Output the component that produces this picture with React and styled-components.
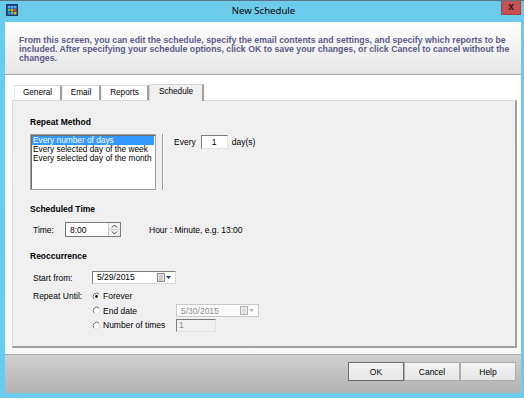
import React from "react";
import styled, { createGlobalStyle } from "styled-components";

const Global = createGlobalStyle`
  html, body { margin: 0; padding: 0; }
  body {
    width: 524px; height: 398px; overflow: hidden;
    font-family: "Liberation Sans", Arial, sans-serif;
    color: #000;
  }
  #root { width: 524px; height: 398px; }
`;

const Window = styled.div`
  width: 524px; height: 398px; box-sizing: border-box;
  background: #6ccbea;
  border-top: 1px solid #587684;
  padding: 0 3px 5px 5px;
  display: flex; flex-direction: column;
`;

const TitleBar = styled.div`
  height: 21px; flex: none;
  display: grid; grid-template-columns: 1fr auto 1fr; align-items: start;
`;

const AppIcon = styled.svg`
  margin: 3px 0 0 1px; display: block;
`;

const Title = styled.div`
  font-family: "Noto Sans", "Liberation Sans", sans-serif;
  font-size: 9.6px; line-height: 20px; color: #000;
  margin-left: 1px;
`;

const CloseBtn = styled.div`
  justify-self: end;
  width: 20px; height: 14px; box-sizing: border-box;
  background: #c75050; border: 1px solid #a84343; border-top: none;
  display: flex; align-items: center; justify-content: center;
  font-weight: bold; font-size: 10px; line-height: 1; color: #1a1a1a;
  padding-bottom: 2px;
`;

const Client = styled.div`
  flex: 1; display: flex; flex-direction: column;
  background: #fff; min-height: 0;
`;

const Header = styled.div`
  height: 53px; flex: none; box-sizing: border-box;
  background: linear-gradient(#ffffff, #e6e6e6);
  border-bottom: 1px solid #a3a3a3;
  padding: 14px 14px 0 14px;
  font-weight: bold; font-size: 8.75px; line-height: 9.2px;
  color: #5b5b88;
`;

const HeaderLine = styled.div`
  white-space: nowrap;
`;

const Body = styled.div`
  flex: 1; display: flex; flex-direction: column; min-height: 0;
  padding: 9px 4px 6px 7px;
  background: linear-gradient(#ffffff, #f9f9f9);
`;

const TabRow = styled.div`
  display: flex; align-items: flex-end; height: 16px;
  margin-left: 2px; position: relative; z-index: 1;
`;

const Tab = styled.div`
  width: ${(p) => p.$w}px; box-sizing: border-box;
  height: ${(p) => (p.$active ? 17 : 15)}px;
  margin-bottom: ${(p) => (p.$active ? -1 : 0)}px;
  background: ${(p) => (p.$active ? "#f0f0f0" : "transparent")};
  border-top: 1px solid #d6d6d6;
  border-left: 1px solid ${(p) => (p.$active ? "#d6d6d6" : "#ececec")};
  border-right: 2px solid #a0a0a0;
  display: flex; justify-content: center; align-items: center;
  font-size: 8.2px; line-height: 1;
  padding-bottom: ${(p) => (p.$active ? 2 : 0)}px;
`;

const Panel = styled.div`
  flex: 1; display: flex; flex-direction: column;
  background: #f0f0f0;
  border-top: 1px solid #d8d8d8; border-left: 1px solid #d8d8d8;
  border-right: 2px solid #9f9f9f; border-bottom: 2px solid #9f9f9f;
  padding: 16px 0 0 17px;
  font-size: 8.5px;
`;

const SectionTitle = styled.div`
  font-weight: bold; font-size: 8.5px; line-height: 11px;
  margin-top: ${(p) => p.$mt || 0}px;
`;

const RepeatRow = styled.div`
  display: flex; align-items: flex-start; margin-top: 6px; height: 56px;
`;

const ListBox = styled.div`
  width: 126px; height: 56px; box-sizing: border-box;
  background: #fff;
  border: 1px solid #a0a0a0;
  box-shadow: inset 1px 1px 0 #6d6d6d;
  padding: 1px;
  font-size: 8.3px; line-height: 9px;
`;

const ListItem = styled.div`
  padding-left: 1px; white-space: nowrap;
  background: ${(p) => (p.$selected ? "#3399ff" : "transparent")};
  color: ${(p) => (p.$selected ? "#fff" : "#000")};
`;

const VSeparator = styled.div`
  width: 1px; height: 56px; background: #a0a0a0;
  border-right: 1px solid #fff; margin-left: 6px;
`;

const EveryGroup = styled.div`
  display: flex; align-items: center; height: 14px;
  margin: 1px 0 0 10px;
`;

const SunkenBox = styled.div`
  box-sizing: border-box;
  width: ${(p) => p.$w}px; height: ${(p) => p.$h || 13}px;
  background: ${(p) => (p.$disabled ? "#f0f0f0" : "#fff")};
  border: 1px solid;
  border-color: #7c7c7c #e3e3e3 #e3e3e3 #7c7c7c;
  display: flex; align-items: center;
  justify-content: ${(p) => (p.$center ? "center" : "flex-start")};
  padding-left: ${(p) => (p.$center ? 0 : 2)}px;
  color: ${(p) => (p.$disabled ? "#8d8d8d" : "#000")};
  font-size: 8.5px; line-height: 1;
  margin: ${(p) => p.$m || 0};
`;

const FieldRow = styled.div`
  display: flex; align-items: center;
  height: ${(p) => p.$h}px; margin-top: ${(p) => p.$mt}px;
  padding-left: 3px;
`;

const FieldLabel = styled.div`
  width: ${(p) => p.$w}px; flex: none; white-space: nowrap;
`;

const SpinBox = styled.div`
  width: 56px; height: 15px; box-sizing: border-box;
  border: 1px solid #7a7a7a; background: #fff;
  display: flex;
`;

const SpinValue = styled.div`
  flex: 1; padding-left: 4px; display: flex; align-items: center;
`;

const SpinButtons = styled.div`
  width: 11px; display: flex; flex-direction: column;
  border-left: 1px solid #c8c8c8;
`;

const SpinBtn = styled.div`
  flex: 1; display: flex; align-items: center; justify-content: center;
  background: #f4f4f4;
  border-bottom: ${(p) => (p.$top ? "1px solid #d0d0d0" : "none")};
`;

const Hint = styled.div`
  margin-left: 28px; white-space: nowrap;
`;

const DateBox = styled.div`
  box-sizing: border-box;
  width: ${(p) => p.$w}px; height: 13px;
  background: ${(p) => (p.$disabled ? "#fbfbfb" : "#fff")};
  border: 1px solid;
  border-color: ${(p) =>
    p.$disabled ? "#c9c9c9" : "#7c7c7c #d8d8d8 #d8d8d8 #7c7c7c"};
  display: flex; align-items: center;
  padding: 0 4px 0 4px;
  color: ${(p) => (p.$disabled ? "#8d8d8d" : "#000")};
`;

const DateText = styled.div`
  flex: 1; line-height: 1;
`;

const DropIcons = styled.div`
  display: flex; align-items: center; gap: 1px;
`;

const UntilGrid = styled.div`
  display: grid; grid-template-columns: 59px auto;
  grid-auto-rows: 14.5px;
  margin-top: 5px; padding-left: 3px;
`;

const UntilLabel = styled.div`
  grid-row: 1; grid-column: 1; align-self: center;
`;

const OptionRow = styled.div`
  grid-column: 2; display: flex; align-items: center;
`;

const RadioOption = styled.div`
  width: 84px; display: flex; align-items: center; gap: 2px; white-space: nowrap;
`;

const Footer = styled.div`
  height: 31px; flex: none;
  border-top: 1px solid #a9a9a9;
  background: linear-gradient(#cfcfcf, #b3b3b3);
  display: flex; justify-content: flex-end; align-items: flex-start;
  padding: 7px 5px 0 0;
`;

const Button = styled.div`
  width: 56px; height: 19px; box-sizing: border-box;
  border: 1px solid ${(p) => (p.$default ? "#6f6f6f" : "#adadad")};
  background: linear-gradient(#f3f3f3, #e6e6e6);
  display: flex; align-items: center; justify-content: center;
  font-size: 8.5px; color: #000;
`;

function Radio({ checked }) {
  return (
    <svg width="9" height="9" viewBox="0 0 9 9">
      <circle cx="4.5" cy="4.5" r="3.5" fill="#fff" />
      <path d="M2.03 6.97 A3.5 3.5 0 0 1 6.97 2.03" stroke="#6a6a6a" fill="none" />
      <path d="M6.97 2.03 A3.5 3.5 0 0 1 2.03 6.97" stroke="#dcdcdc" fill="none" />
      {checked && <circle cx="4.5" cy="4.5" r="1.4" fill="#111" />}
    </svg>
  );
}

function CalendarDrop({ disabled }) {
  return (
    <DropIcons>
      <svg width="8" height="9" viewBox="0 0 8 9">
        <rect x="0.5" y="0.5" width="7" height="8" fill={disabled ? "#eeeeee" : "#e4e4e4"} stroke={disabled ? "#b0b0b0" : "#8a8a8a"} />
        <path d="M2 3h4M2 5h4M2 7h3" stroke={disabled ? "#cfcfcf" : "#b4b4b4"} />
      </svg>
      <svg width="5" height="3" viewBox="0 0 5 3">
        <path d="M0 0h5L2.5 3z" fill={disabled ? "#b8b8b8" : "#1e3b7c"} />
      </svg>
    </DropIcons>
  );
}

function WindowIcon() {
  const cells = [
    ["#5aa9e6", "#5aa9e6", "#5aa9e6"],
    ["#6cbf3f", "#f0a22e", "#d9483b"],
    ["#3f86d4", "#7cc84a", "#e6b422"],
  ];
  return (
    <AppIcon width="12" height="12" viewBox="0 0 12 12">
      <rect x="0.5" y="0.5" width="11" height="11" fill="#1d4f8f" stroke="#173c6c" />
      {cells.map((row, r) =>
        row.map((c, i) => (
          <rect key={r + "-" + i} x={2 + i * 3} y={2 + r * 3} width="2.4" height="2.4" fill={c} />
        ))
      )}
    </AppIcon>
  );
}

const tabs = [
  { label: "General", w: 48 },
  { label: "Email", w: 39 },
  { label: "Reports", w: 48 },
  { label: "Schedule", w: 55, active: true },
];

const headerLines = [
  "From this screen, you can edit the schedule, specify the email contents and settings, and specify which reports to be",
  "included. After specifying your schedule options, click OK to save your changes, or click Cancel to cancel without the",
  "changes.",
];

export default function App() {
  return (
    <>
      <Global />
      <Window>
        <TitleBar>
          <WindowIcon />
          <Title>New Schedule</Title>
          <CloseBtn>x</CloseBtn>
        </TitleBar>
        <Client>
          <Header>
            {headerLines.map((l) => (
              <HeaderLine key={l}>{l}</HeaderLine>
            ))}
          </Header>
          <Body>
            <TabRow>
              {tabs.map((t) => (
                <Tab key={t.label} $w={t.w} $active={t.active}>
                  {t.label}
                </Tab>
              ))}
            </TabRow>
            <Panel>
              <SectionTitle>Repeat Method</SectionTitle>
              <RepeatRow>
                <ListBox>
                  <ListItem $selected>Every number of days</ListItem>
                  <ListItem>Every selected day of the week</ListItem>
                  <ListItem>Every selected day of the month</ListItem>
                </ListBox>
                <VSeparator />
                <EveryGroup>
                  <span>Every</span>
                  <SunkenBox $w={27} $h={14} $center $m="0 4px 0 5px">1</SunkenBox>
                  <span>day(s)</span>
                </EveryGroup>
              </RepeatRow>

              <SectionTitle $mt={14}>Scheduled Time</SectionTitle>
              <FieldRow $h={15} $mt={7}>
                <FieldLabel $w={32}>Time:</FieldLabel>
                <SpinBox>
                  <SpinValue>8:00</SpinValue>
                  <SpinButtons>
                    <SpinBtn $top>
                      <svg width="7" height="4" viewBox="0 0 7 4">
                        <path d="M1 3.5 L3.5 1 L6 3.5" stroke="#3c3c3c" fill="none" />
                      </svg>
                    </SpinBtn>
                    <SpinBtn>
                      <svg width="7" height="4" viewBox="0 0 7 4">
                        <path d="M1 0.5 L3.5 3 L6 0.5" stroke="#3c3c3c" fill="none" />
                      </svg>
                    </SpinBtn>
                  </SpinButtons>
                </SpinBox>
                <Hint>Hour : Minute, e.g. 13:00</Hint>
              </FieldRow>

              <SectionTitle $mt={14}>Reoccurrence</SectionTitle>
              <FieldRow $h={13} $mt={9}>
                <FieldLabel $w={59}>Start from:</FieldLabel>
                <DateBox $w={84}>
                  <DateText>5/29/2015</DateText>
                  <CalendarDrop />
                </DateBox>
              </FieldRow>

              <UntilGrid>
                <UntilLabel>Repeat Until:</UntilLabel>
                <OptionRow>
                  <RadioOption>
                    <Radio checked />
                    Forever
                  </RadioOption>
                </OptionRow>
                <OptionRow>
                  <RadioOption>
                    <Radio />
                    End date
                  </RadioOption>
                  <DateBox $w={83} $disabled>
                    <DateText>5/30/2015</DateText>
                    <CalendarDrop disabled />
                  </DateBox>
                </OptionRow>
                <OptionRow>
                  <RadioOption>
                    <Radio />
                    Number of times
                  </RadioOption>
                  <SunkenBox $w={40} $disabled>1</SunkenBox>
                </OptionRow>
              </UntilGrid>
            </Panel>
          </Body>
          <Footer>
            <Button $default>OK</Button>
            <Button>Cancel</Button>
            <Button>Help</Button>
          </Footer>
        </Client>
      </Window>
    </>
  );
}
